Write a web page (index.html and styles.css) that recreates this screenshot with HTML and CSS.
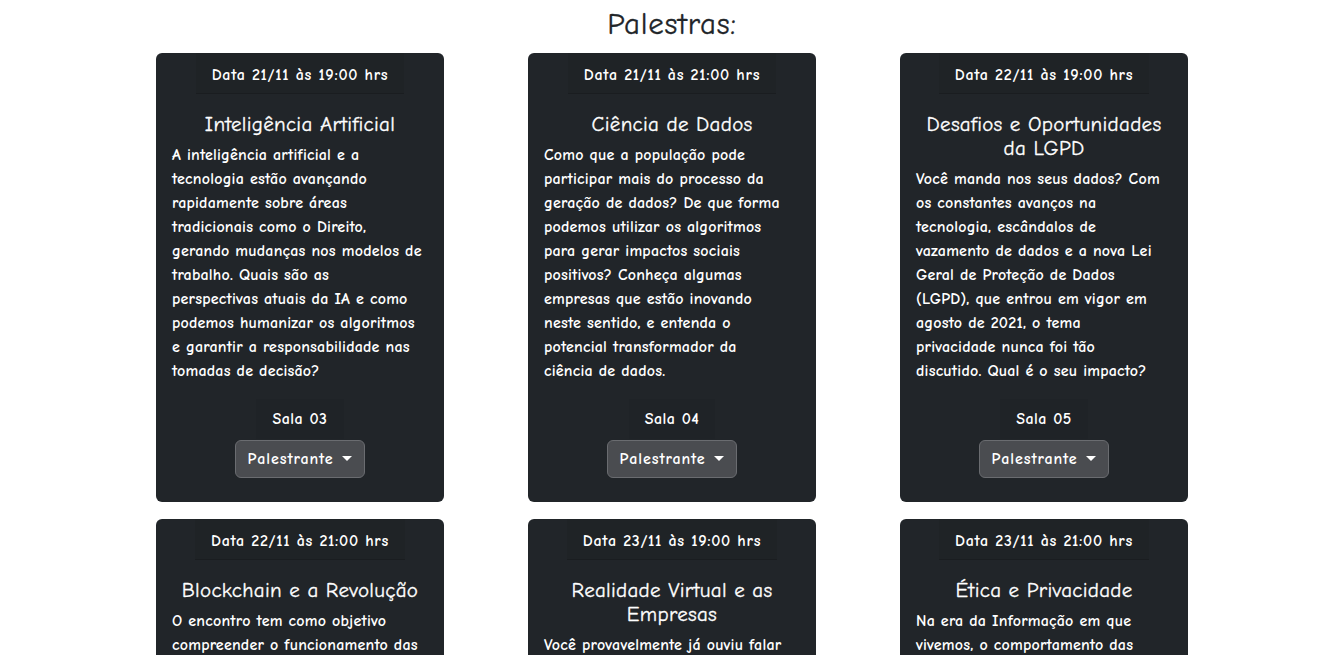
FILE: index.html
```html
<!DOCTYPE html>
<html lang="pt-BR">
<head>
<meta charset="utf-8">
<title>Palestras</title>
<link rel="stylesheet" href="styles.css">
</head>
<body>
<h1 class="page-title">Palestras:</h1>
<main class="grid">
  <article class="card">
    <div class="card-header">Data 21/11 às 19:00 hrs</div>
    <div class="card-body">
      <h5 class="card-title">Inteligência Artificial</h5>
      <p class="card-text">A inteligência artificial e a<br>tecnologia estão avançando<br>rapidamente sobre áreas<br>tradicionais como o Direito,<br>gerando mudanças nos modelos de<br>trabalho. Quais são as<br>perspectivas atuais da IA e como<br>podemos humanizar os algoritmos<br>e garantir a responsabilidade nas<br>tomadas de decisão?</p>
    </div>
    <div class="card-footer">
      <div class="room">Sala 03</div>
      <button class="btn dropdown-toggle" type="button">Palestrante</button>
    </div>
  </article>
  <article class="card">
    <div class="card-header">Data 21/11 às 21:00 hrs</div>
    <div class="card-body">
      <h5 class="card-title">Ciência de Dados</h5>
      <p class="card-text">Como que a população pode<br>participar mais do processo da<br>geração de dados? De que forma<br>podemos utilizar os algoritmos<br>para gerar impactos sociais<br>positivos? Conheça algumas<br>empresas que estão inovando<br>neste sentido, e entenda o<br>potencial transformador da<br>ciência de dados.</p>
    </div>
    <div class="card-footer">
      <div class="room">Sala 04</div>
      <button class="btn dropdown-toggle" type="button">Palestrante</button>
    </div>
  </article>
  <article class="card">
    <div class="card-header">Data 22/11 às 19:00 hrs</div>
    <div class="card-body">
      <h5 class="card-title">Desafios e Oportunidades<br>da LGPD</h5>
      <p class="card-text">Você manda nos seus dados? Com<br>os constantes avanços na<br>tecnologia, escândalos de<br>vazamento de dados e a nova Lei<br>Geral de Proteção de Dados<br>(LGPD), que entrou em vigor em<br>agosto de 2021, o tema<br>privacidade nunca foi tão<br>discutido. Qual é o seu impacto?</p>
    </div>
    <div class="card-footer">
      <div class="room">Sala 05</div>
      <button class="btn dropdown-toggle" type="button">Palestrante</button>
    </div>
  </article>
  <article class="card">
    <div class="card-header">Data 22/11 às 21:00 hrs</div>
    <div class="card-body">
      <h5 class="card-title">Blockchain e a Revolução</h5>
      <p class="card-text">O encontro tem como objetivo<br>compreender o funcionamento das<br>redes blockchain e como elas<br>estão transformando o sistema<br>financeiro e os contratos.</p>
    </div>
    <div class="card-footer">
      <div class="room">Sala 06</div>
      <button class="btn dropdown-toggle" type="button">Palestrante</button>
    </div>
  </article>
  <article class="card">
    <div class="card-header">Data 23/11 às 19:00 hrs</div>
    <div class="card-body">
      <h5 class="card-title">Realidade Virtual e as<br>Empresas</h5>
      <p class="card-text">Você provavelmente já ouviu falar<br>em realidade virtual, mas sabe<br>como ela pode ser usada pelas<br>empresas no dia a dia?</p>
    </div>
    <div class="card-footer">
      <div class="room">Sala 07</div>
      <button class="btn dropdown-toggle" type="button">Palestrante</button>
    </div>
  </article>
  <article class="card">
    <div class="card-header">Data 23/11 às 21:00 hrs</div>
    <div class="card-body">
      <h5 class="card-title">Ética e Privacidade</h5>
      <p class="card-text">Na era da Informação em que<br>vivemos, o comportamento das<br>pessoas na internet gera dados<br>valiosos. Como proteger a sua<br>privacidade?</p>
    </div>
    <div class="card-footer">
      <div class="room">Sala 08</div>
      <button class="btn dropdown-toggle" type="button">Palestrante</button>
    </div>
  </article>
</main>
</body>
</html>
```

FILE: styles.css
```css
* { box-sizing: border-box; }

body {
  margin: 0;
  background: #ffffff;
  color: #212529;
  font-family: "Comic Sans MS", "Comic Neue", "Liberation Sans", sans-serif;
}

.page-title {
  margin: 7px 0 12px;
  font-size: 31px;
  line-height: 34px;
  font-weight: 400;
  letter-spacing: 0.7px;
  text-align: center;
  -webkit-text-stroke: 0.3px #212529;
}

.grid {
  display: grid;
  grid-template-columns: repeat(3, 288px);
  column-gap: 84px;
  row-gap: 17px;
  justify-content: center;
}

.card {
  display: flex;
  flex-direction: column;
  background: #212529;
  color: #ffffff;
  border-radius: 6px;
  text-align: center;
}

.card-header {
  align-self: center;
  padding: 10px 16px 6px;
  font-size: 16px;
  line-height: 24px;
  font-weight: 700;
  letter-spacing: 0.7px;
  background: rgba(0, 0, 0, 0.05);
  border-bottom: 1px solid rgba(0, 0, 0, 0.15);
}

.card-body {
  flex: 1;
  padding: 18px 16px 16px;
}

.card-title {
  margin: 0 0 7px;
  font-size: 21px;
  line-height: 24px;
  font-weight: 400;
  letter-spacing: 0.3px;
  -webkit-text-stroke: 0.3px #ffffff;
}

.card-text {
  margin: 0;
  text-align: left;
  font-size: 16px;
  line-height: 24px;
  font-weight: 700;
  letter-spacing: 0.2px;
  white-space: nowrap;
}

.card-footer {
  display: flex;
  flex-direction: column;
  align-items: center;
  padding: 0 0 24px;
}

.room {
  padding: 8px 16px;
  font-size: 16px;
  line-height: 24px;
  font-weight: 700;
  letter-spacing: 0.5px;
  background: rgba(0, 0, 0, 0.03);
}

.btn {
  margin-top: 1px;
  height: 38px;
  padding: 0 12px;
  font-family: inherit;
  font-size: 16px;
  font-weight: 700;
  letter-spacing: 0.9px;
  color: #ffffff;
  background: #4a4c50;
  border: 1px solid #6a6c70;
  border-radius: 6px;
}

.dropdown-toggle::after {
  content: "";
  display: inline-block;
  margin-left: 0.55em;
  vertical-align: 0.2em;
  border-top: 0.32em solid #ffffff;
  border-left: 0.32em solid transparent;
  border-right: 0.32em solid transparent;
}
```
